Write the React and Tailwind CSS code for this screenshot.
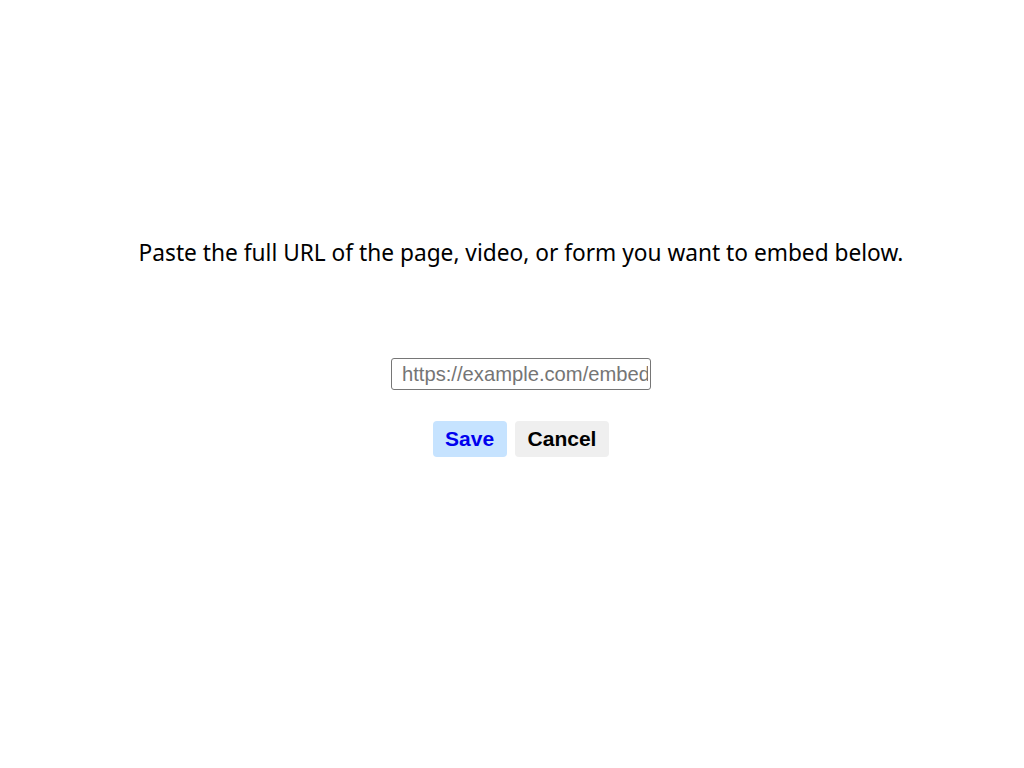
export default function App() {
  return (
    <div className="min-h-[768px] bg-white flex flex-col items-center pt-[239px] pl-[18px]">
      <p className="text-[22.7px] leading-[28px] text-black font-['Noto_Sans','Open_Sans',sans-serif]">
        Paste the full URL of the page, video, or form you want to embed below.
      </p>
      <input
        type="text"
        placeholder="https://example.com/embed"
        className="mt-[91px] w-[260px] h-[32px] border border-[#767676] rounded-[3px] pl-[10px] pr-[2px] text-[20.2px] font-['Liberation_Sans',Arial,sans-serif] placeholder:text-[#757575] outline-none"
      />
      <div className="mt-[31px] flex gap-2">
        <button className="h-[36px] px-[12.5px] rounded-[4px] bg-[#c6e3ff] text-[#0000ee] font-bold text-[21px] font-['Liberation_Sans',Arial,sans-serif]">
          Save
        </button>
        <button className="h-[36px] px-[13px] rounded-[4px] bg-[#efefef] text-black font-bold text-[21px] font-['Liberation_Sans',Arial,sans-serif]">
          Cancel
        </button>
      </div>
    </div>
  );
}
